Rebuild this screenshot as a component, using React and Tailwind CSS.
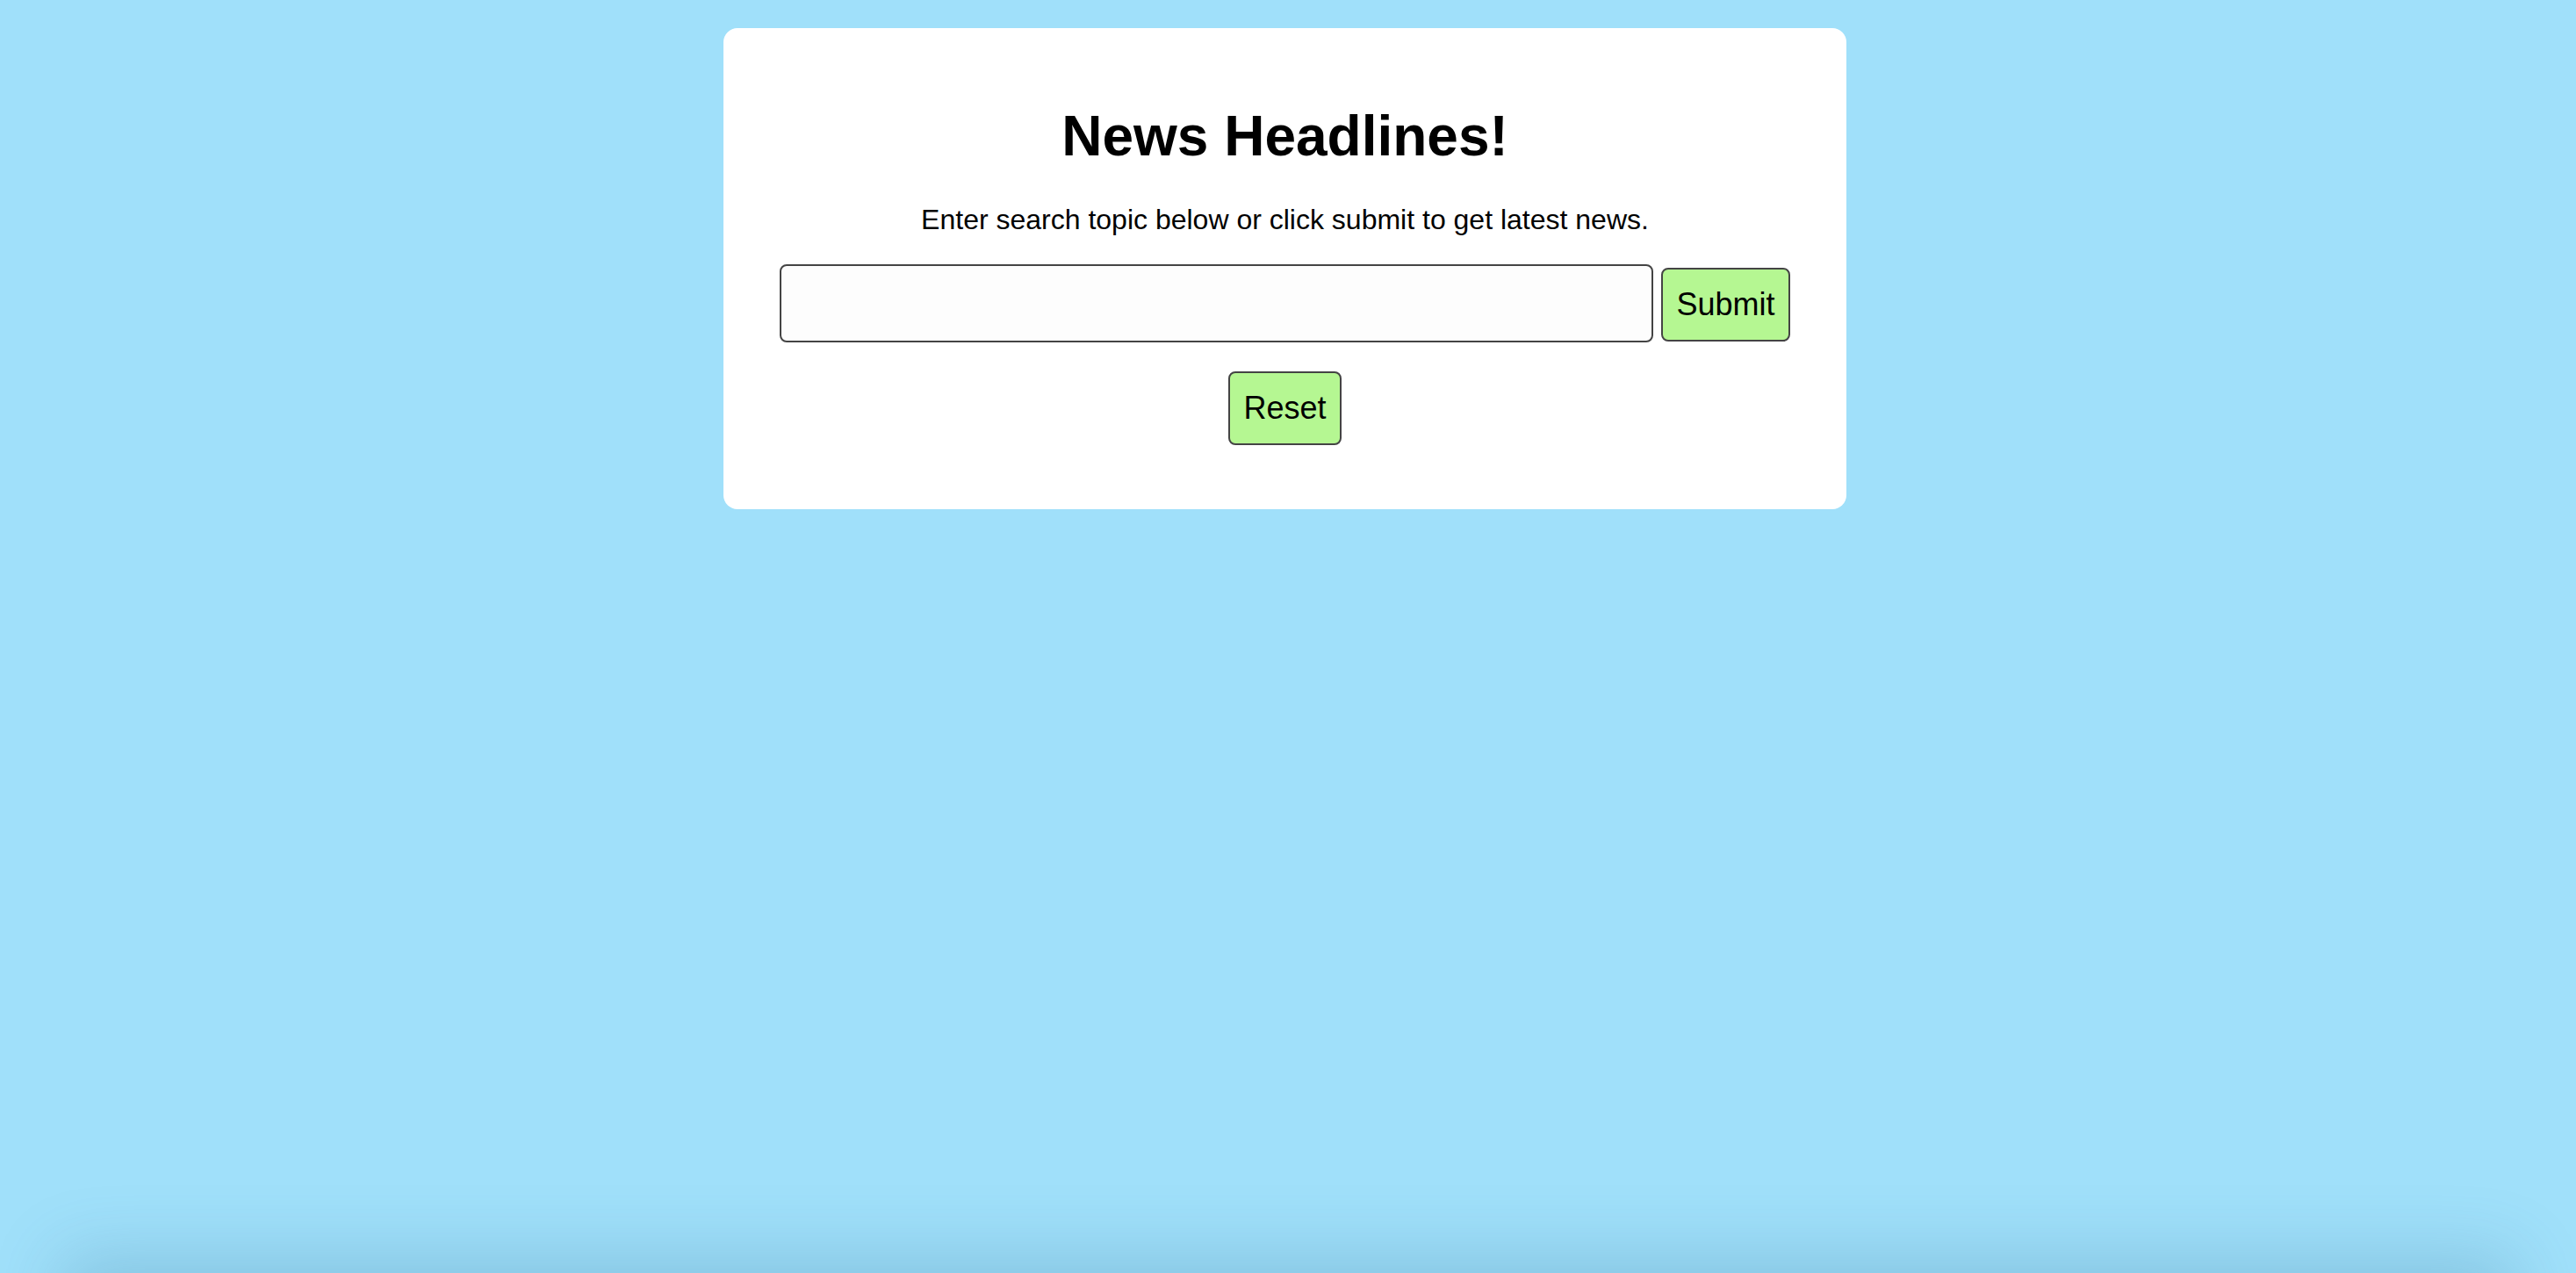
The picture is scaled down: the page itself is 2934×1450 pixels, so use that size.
import { useState } from "react";

function App() {
  const [topic, setTopic] = useState("");

  const handleSubmit = (e) => {
    e.preventDefault();
  };

  return (
    <div
      className="min-h-screen w-full bg-[#a0e0fa] pt-[32px] pr-[7px] overflow-hidden relative"
      style={{ fontFamily: '"Liberation Sans", Arial, sans-serif' }}
    >
      <form
        onSubmit={handleSubmit}
        className="w-[1279px] mx-auto bg-white rounded-[16px] px-[64px] pt-[86px] pb-[73px] flex flex-col items-center text-black"
      >
        <h1 className="text-[64px] font-bold leading-[74px]">News Headlines!</h1>

        <p className="mt-[40px] text-[32px] leading-[37px]">
          Enter search topic below or click submit to get latest news.
        </p>

        {/* search row */}
        <div className="mt-[32px] w-full flex items-start gap-[9px]">
          <input
            type="text"
            value={topic}
            onChange={(e) => setTopic(e.target.value)}
            className="w-[995px] h-[89px] border-2 border-[#444] rounded-[8px] bg-[#fdfdfd] px-4 text-[32px] focus:outline-none"
          />
          <button
            type="submit"
            className="mt-[4px] w-[147px] h-[84px] border-2 border-[#444] rounded-[8px] bg-[#b5f792] text-[36px] leading-none"
          >
            Submit
          </button>
        </div>

        <button
          type="button"
          onClick={() => setTopic("")}
          className="mt-[33px] w-[129px] h-[84px] border-2 border-[#444] rounded-[8px] bg-[#b5f792] text-[36px] leading-none"
        >
          Reset
        </button>
      </form>

      {/* shadow peeking in at the bottom of the window */}
      <div className="fixed left-[90px] right-[90px] top-full h-[200px] shadow-[0_0_80px_20px_rgba(40,100,140,0.22)]" />
    </div>
  );
}

export default App;
